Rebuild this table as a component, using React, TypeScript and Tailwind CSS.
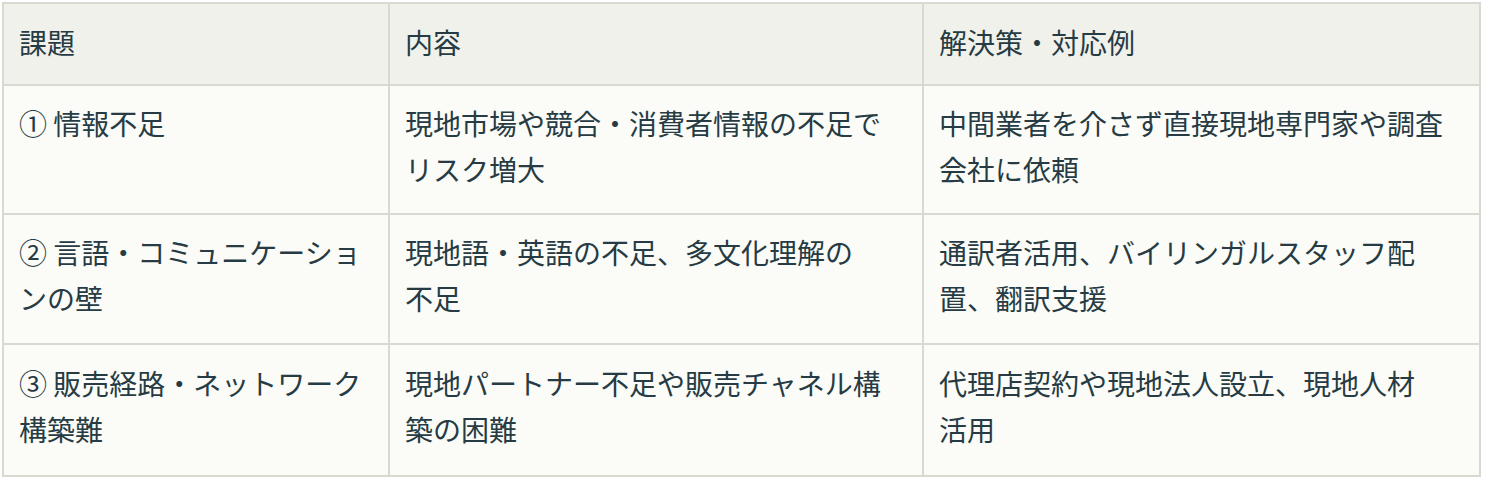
const rows: { pad: string; cells: [React.ReactNode, React.ReactNode, React.ReactNode] }[] = [
  {
    pad: 'pt-[14px] pb-[21px]',
    cells: [
      <>① 情報不足</>,
      <>現地市場や競合・消費者情報の不足で<br />リスク増大</>,
      <>中間業者を介さず直接現地専門家や調査<br />会社に依頼</>,
    ],
  },
  {
    pad: 'pt-[14px] pb-[22px]',
    cells: [
      <>② 言語・コミュニケーショ<br />ンの壁</>,
      <>現地語・英語の不足、多文化理解の<br />不足</>,
      <>通訳者活用、バイリンガルスタッフ配<br />置、翻訳支援</>,
    ],
  },
  {
    pad: 'pt-[15px] pb-[23px]',
    cells: [
      <>③ 販売経路・ネットワーク<br />構築難</>,
      <>現地パートナー不足や販売チャネル構<br />築の困難</>,
      <>代理店契約や現地法人設立、現地人材<br />活用</>,
    ],
  },
];

export default function App() {
  const cell = 'border-2 border-[#d9d9d1] px-[15px] text-left align-top whitespace-nowrap';

  return (
    <div className="min-h-screen bg-white pl-[2px] pt-[2px]">
      <table className="w-[1479px] table-fixed border-collapse bg-[#fbfbf8] font-['Noto_Sans_CJK_JP','Noto_Sans',sans-serif] text-[28px] leading-[46px] text-[#263b43]">
        <colgroup>
          <col className="w-[386px]" />
          <col className="w-[534px]" />
          <col />
        </colgroup>
        <thead>
          <tr className="bg-[#f1f1ec]">
            <th className={cell + ' pt-[15px] pb-[19px] font-normal'}>課題</th>
            <th className={cell + ' pt-[15px] pb-[19px] font-normal'}>内容</th>
            <th className={cell + ' pt-[15px] pb-[19px] font-normal'}>解決策・対応例</th>
          </tr>
        </thead>
        <tbody>
          {rows.map((r, i) => (
            <tr key={i}>
              {r.cells.map((c, j) => (
                <td key={j} className={cell + ' ' + r.pad}>
                  {c}
                </td>
              ))}
            </tr>
          ))}
        </tbody>
      </table>
    </div>
  );
}
